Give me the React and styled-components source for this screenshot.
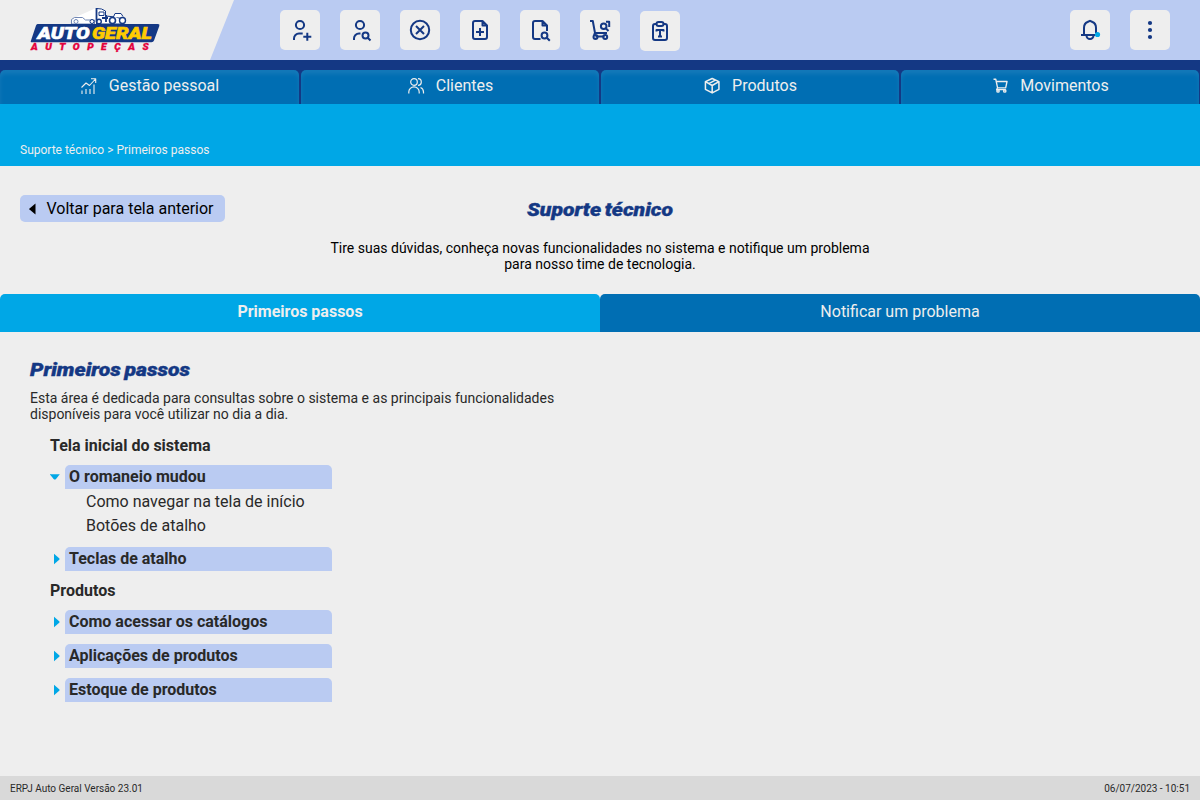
import React from "react";
import styled, { createGlobalStyle } from "styled-components";

const Global = createGlobalStyle`
  * { box-sizing: border-box; }
  body { margin: 0; background: #eeeeee; font-family: Roboto, "Liberation Sans", sans-serif; }
  h1, h2, h3, p, ul { margin: 0; padding: 0; }
  button { font-family: inherit; border: 0; padding: 0; margin: 0; }
`;

const Page = styled.div`
  width: 1200px;
  height: 800px;
  display: flex;
  flex-direction: column;
  overflow: hidden;
  background: #eeeeee;
`;

const Header = styled.header`
  height: 60px;
  flex: none;
  display: flex;
  background: #bacbf2;
`;

const LogoPanel = styled.div`
  width: 234px;
  height: 60px;
  margin-right: 46px;
  background: #eeeeee;
  clip-path: polygon(0 0, 100% 0, 210px 100%, 0 100%);
`;

const Shortcuts = styled.div`
  display: flex;
  gap: 20px;
  padding-top: 10px;
`;

const UserActions = styled(Shortcuts)`
  margin-left: auto;
  padding-right: 30px;
`;

const IconButton = styled.button`
  width: 40px;
  height: 40px;
  margin-top: ${(p) => (p.$lower ? "1px" : "0")};
  border-radius: 5px;
  background: #eeeeee;
  display: flex;
  align-items: center;
  justify-content: center;
`;

const Glyph = styled.svg`
  width: ${(p) => p.$size || 24}px;
  height: ${(p) => p.$size || 24}px;
  flex: none;
  fill: none;
  stroke: ${(p) => p.$color || "#143884"};
  stroke-width: ${(p) => p.$weight || 2};
  stroke-linejoin: round;
`;

const Menu = styled.nav`
  height: 44px;
  flex: none;
  display: grid;
  grid-template-columns: repeat(4, 1fr);
  padding-top: 10px;
  background: #143884;
`;

const MenuItem = styled.a`
  margin: 0 1px;
  padding-bottom: 3px;
  display: flex;
  align-items: center;
  justify-content: center;
  gap: 11px;
  border-radius: 5px 5px 0 0;
  background: #006eb3;
  box-shadow: inset 0 4px 4px rgba(255, 255, 255, 0.08);
  color: #eeeeee;
  font-size: 16px;
  &:first-child { margin-left: 0; }
`;

const Banner = styled.div`
  height: 62px;
  flex: none;
  padding: 39px 20px 0;
  background: #00a7e6;
  color: #eeeeee;
  font-size: 12px;
  line-height: 14px;
`;

const Intro = styled.section`
  height: 128px;
  flex: none;
  display: grid;
  grid-template-columns: 1fr 560px 1fr;
  padding: 29px 20px 0;
`;

const BackButton = styled.button`
  width: 204.5px;
  height: 27px;
  display: flex;
  align-items: center;
  gap: 10.5px;
  padding-left: 8px;
  border-radius: 5px;
  background: #bacbf2;
  color: #000;
  font-size: 16px;
`;

const IntroBody = styled.div`
  padding-top: 1px;
  text-align: center;
`;

const Title = styled.h1`
  font-size: 19px;
  line-height: 28px;
  font-weight: 900;
  font-style: italic;
  word-spacing: -1.5px;
  color: #143884;
  -webkit-text-stroke: 0.4px #143884;
  transform: scaleX(1.115);
  transform-origin: ${(p) => p.$origin || "center"};
`;

const Lead = styled.p`
  margin-top: 16px;
  font-size: 14px;
  line-height: 16px;
  color: #000;
`;

const Tabs = styled.div`
  height: 38px;
  flex: none;
  display: flex;
`;

const Tab = styled.button`
  flex: 1;
  padding-bottom: 3px;
  border-radius: 5px 5px 0 0;
  background: ${(p) => (p.$active ? "#00a7e6" : "#006eb3")};
  color: #eeeeee;
  font-size: 16px;
  font-weight: ${(p) => (p.$active ? 700 : 400)};
`;

const Content = styled.main`
  flex: 1;
  padding: 24px 30px 0;
`;

const Description = styled.p`
  width: 560px;
  margin-top: 6px;
  font-size: 14px;
  line-height: 16px;
  color: #292929;
`;

const Topics = styled.div`
  width: 302px;
  padding: 14px 0 0 20px;
`;

const GroupTitle = styled.h3`
  font-size: 16px;
  line-height: 19px;
  height: 19px;
  margin-bottom: 10px;
  font-weight: 700;
  color: #292929;
`;

const Topic = styled.div`
  display: flex;
  align-items: center;
  height: 24px;
  margin-bottom: 10px;
`;

const Caret = styled.svg`
  width: 15px;
  height: 24px;
  flex: none;
  fill: #00a7e6;
`;

const TopicLabel = styled.div`
  flex: 1;
  height: 24px;
  padding-left: 4px;
  border-radius: 5px 5px 0 0;
  background: #bacbf2;
  color: #292929;
  font-size: 16px;
  font-weight: 700;
  line-height: 24px;
`;

const SubList = styled.ul`
  list-style: none;
  margin: -9px 0 9px;
  padding-left: 36px;
  font-size: 16px;
  line-height: 24px;
  color: #292929;
  white-space: nowrap;
`;

const Footer = styled.footer`
  height: 24px;
  flex: none;
  display: flex;
  align-items: center;
  justify-content: space-between;
  padding: 0 10px;
  background: #d9d9d9;
  color: #292929;
  font-size: 10px;
`;

const Logo = () => (
  <svg width="234" height="60" viewBox="0 0 234 60">
    <path d="M76 17 96 8V22H76Z" fill="#fff" />
    <g fill="#fff" stroke="#143884" strokeWidth="1">
      <path d="M71.500 24v-4.500l3-2h8l3 2.500h9v4z" stroke="#7187b5" />
      <path d="M96.500 24V8.500l5 .5 4 2v5l10 1 7 2v5z" />
      <path d="M99 12h5v3.500h-5zM113 18l2-4.500h6l2 3" />
      <circle cx="76" cy="21.500" r="2" stroke="#7187b5" />
      <circle cx="92" cy="21.500" r="2" />
      <circle cx="99" cy="21.500" r="2.300" strokeWidth="1.400" />
      <circle cx="112.500" cy="20.500" r="3" strokeWidth="1.600" />
      <circle cx="122.500" cy="20.500" r="3" strokeWidth="1.400" />
    </g>
    <path d="M96.500 8v14M106 15v7M102 18h6" stroke="#143884" strokeWidth="1.800" />
    <path d="M37.500 24H158q2 0 1.300 2L154 40.500q-.6 1.800-2.500 1.800H32q-2 0-1-1.800L36 25.500q.5-1.500 1.500-1.500Z" fill="#143884" />
    <g fontFamily="Roboto, sans-serif" fontWeight="900" fontStyle="italic">
      <text x="37.500" y="39.300" fontSize="17" textLength="52" lengthAdjust="spacingAndGlyphs" fill="#fff" stroke="#fff" strokeWidth=".6">AUTO</text>
      <text x="92" y="39.300" fontSize="17" textLength="60" lengthAdjust="spacingAndGlyphs" fill="#ffcb00" stroke="#ffcb00" strokeWidth=".6">GERAL</text>
      <text x="0" y="50.500" fontSize="8.500" textLength="98" fill="#e4003c" stroke="#e4003c" strokeWidth=".3" transform="translate(31 0) scale(1.2 1)">AUTOPEÇAS</text>
    </g>
  </svg>
);

const shortcuts = [
  ["Novo cliente", <><circle cx="12" cy="7" r="4.1" /><path d="M6 22v-1.500a5 5 0 0 1 5-5h3.700M19.300 14.700v8M15.300 18.700h8" /></>],
  ["Buscar cliente", <><circle cx="12" cy="7" r="4.100" /><path d="M6 22v-1.500a5 5 0 0 1 5-5h1.500M19.500 19.500l3 3" /><circle cx="17.500" cy="17.500" r="3" /></>],
  ["Cancelar", <><circle cx="12" cy="12" r="9.200" /><path d="m8 8 8 8M16 8l-8 8" /></>],
  ["Novo documento", <><path d="M14.500 3H7a2 2 0 0 0-2 2v14a2 2 0 0 0 2 2h10a2 2 0 0 0 2-2V7.500zM14.500 3v4.500H19M12 10v8M8 14h8" /></>],
  ["Buscar documento", <><path d="M12.500 21H7a2 2 0 0 1-2-2V5a2 2 0 0 1 2-2h7.500L19 7.500V13M14.500 3v4.500H19M18.800 19.800l3 3" /><circle cx="16.500" cy="17.500" r="2.900" /></>],
  ["Buscar pedido", <><path d="M2 3h2.800l2.200 12h12M7.500 18.500h9M7 15l-1 2M18 3.800h3.200V9M18 10.500l2.500 2.500" /><circle cx="15.700" cy="8.300" r="2.800" /><circle cx="7.500" cy="19" r="2" /><circle cx="17.200" cy="19" r="2" /></>],
  ["Ficha", <><path d="M8.500 5H7a2 2 0 0 0-2 2v12a2 2 0 0 0 2 2h10a2 2 0 0 0 2-2V7a2 2 0 0 0-2-2h-1.500M8.500 12.500V11h7v1.500M12 11v7M10 17.500h4" /><rect x="8.500" y="3" width="7" height="4" rx="2" /></>],
];

const menu = [
  ["Gestão pessoal", "-0.5 0 18 18", <><path d="M1.500 17v-3.500M5.500 17v-5M9.500 17v-5M13.500 17V7.500M1 10.500 5.500 6l3.500 2.500L15 2M10.500 1.800H15.200V6" /></>, 1.1],
  ["Clientes", "-0.5 0 18 18", <><circle cx="6.500" cy="5" r="3.300" /><path d="M1.300 16.500v-1.500a5.200 5.200 0 0 1 10.400 0v1.500M10.500 1.700a3.300 3.300 0 0 1 0 6.600M13 10.500q3 1.300 3 4.500v1.500" /></>, 1.200],
  ["Produtos", "-1.200 -0.200 20 20", <><path d="M9 1.500 16.500 5v8.500l-7.500 4-7.500-4V5zM1.500 5l7.500 4.200L16.500 5M9 9.200v8.300M5.300 7.100l7.200-3.900" /></>, 1.700],
  ["Movimentos", "-1.800 -0.500 20 20", <><path d="M1 2h2.500l2 9.500h9L16 4.500H4M5.500 11.500 4.500 13.500h10" /><circle cx="6" cy="15" r="1.300" /><circle cx="13.500" cy="15" r="1.300" /></>, 1.500],
];

const TopicRow = ({ open, children }) => (
  <Topic>
    <Caret viewBox="0 0 15 24">
      {open ? <path d="M-.2 9.200h10L6 14q-1.200 1-2.400 0z" /> : <path d="M4 6.800v10.400l5.200-4.400q.9-.8 0-1.600z" />}
    </Caret>
    <TopicLabel>{children}</TopicLabel>
  </Topic>
);

export default function App() {
  return (
    <Page>
      <Global />
      <Header>
        <LogoPanel><Logo /></LogoPanel>
        <Shortcuts>
          {shortcuts.map(([name, art]) => (
            <IconButton key={name} aria-label={name} $lower={name === "Ficha"}>
              <Glyph viewBox="0 0 24 24">{art}</Glyph>
            </IconButton>
          ))}
        </Shortcuts>
        <UserActions>
          <IconButton aria-label="Notificações">
            <Glyph viewBox="0 0 24 24">
              <path d="M3 17h14M6 17V10q0-4.500 3.500-6l2.500-1.200L14.500 4Q18 5.500 18 10v5M8.500 17.500a3.500 3.500 0 0 0 7 0" />
              <circle cx="19.500" cy="16.500" r="2.600" fill="#00a7e6" stroke="none" />
            </Glyph>
          </IconButton>
          <IconButton aria-label="Mais opções">
            <Glyph viewBox="0 0 24 24">
              <g fill="#143884" stroke="none">
                <circle cx="12" cy="5" r="2.100" /><circle cx="12" cy="12" r="2.100" /><circle cx="12" cy="19" r="2.100" />
              </g>
            </Glyph>
          </IconButton>
        </UserActions>
      </Header>
      <Menu>
        {menu.map(([name, box, art, weight]) => (
          <MenuItem key={name}>
            <Glyph viewBox={box} $size={18} $color="#eeeeee" $weight={weight}>{art}</Glyph>
            {name}
          </MenuItem>
        ))}
      </Menu>
      <Banner>Suporte técnico &gt; Primeiros passos</Banner>
      <Intro>
        <BackButton>
          <svg width="8" height="12" viewBox="0 0 8 12"><path d="M7.500.5v11L1.500 6.600q-.7-.6 0-1.200z" /></svg>
          Voltar para tela anterior
        </BackButton>
        <IntroBody>
          <Title>Suporte técnico</Title>
          <Lead>
            Tire suas dúvidas, conheça novas funcionalidades no sistema e notifique um problema
            <br />
            para nosso time de tecnologia.
          </Lead>
        </IntroBody>
      </Intro>
      <Tabs>
        <Tab $active>Primeiros passos</Tab>
        <Tab>Notificar um problema</Tab>
      </Tabs>
      <Content>
        <Title as="h2" $origin="left">Primeiros passos</Title>
        <Description>
          Esta área é dedicada para consultas sobre o sistema e as principais funcionalidades
          <br />
          disponíveis para você utilizar no dia a dia.
        </Description>
        <Topics>
          <GroupTitle>Tela inicial do sistema</GroupTitle>
          <TopicRow open>O romaneio mudou</TopicRow>
          <SubList>
            <li>Como navegar na tela de início</li>
            <li>Botões de atalho</li>
          </SubList>
          <TopicRow>Teclas de atalho</TopicRow>
          <GroupTitle>Produtos</GroupTitle>
          <TopicRow>Como acessar os catálogos</TopicRow>
          <TopicRow>Aplicações de produtos</TopicRow>
          <TopicRow>Estoque de produtos</TopicRow>
        </Topics>
      </Content>
      <Footer>
        <span>ERPJ Auto Geral Versão 23.01</span>
        <span>06/07/2023 - 10:51</span>
      </Footer>
    </Page>
  );
}
